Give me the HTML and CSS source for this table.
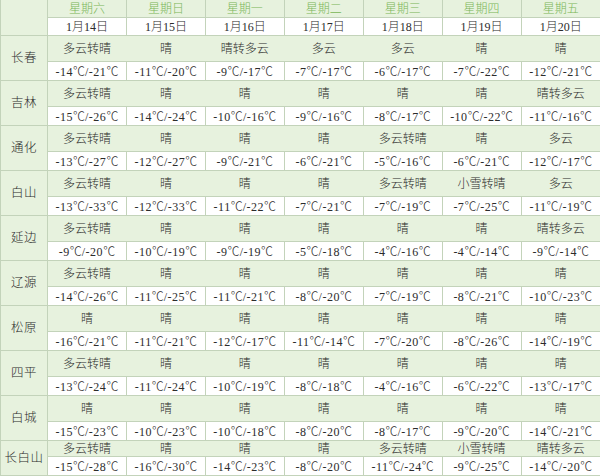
FILE: index.html
```html
<!DOCTYPE html>
<html lang="zh-CN">
<head>
<meta charset="utf-8">
<title>吉林天气预报</title>
<link rel="stylesheet" href="styles.css">
</head>
<body>
<table class="wx">
<colgroup><col class="c-city"><col><col><col><col><col><col><col></colgroup>
<thead>
<tr class="wk"><th rowspan="2" class="corner"></th><th>星期六</th><th>星期日</th><th>星期一</th><th>星期二</th><th>星期三</th><th>星期四</th><th>星期五</th></tr>
<tr class="dt"><td>1月14日</td><td>1月15日</td><td>1月16日</td><td>1月17日</td><td>1月18日</td><td>1月19日</td><td>1月20日</td></tr>
</thead>
<tbody>
<tr class="w"><th rowspan="2" class="city">长春</th><td>多云转晴</td><td>晴</td><td>晴转多云</td><td>多云</td><td>多云</td><td>晴</td><td>晴</td></tr>
<tr class="t"><td>-14<span class="u">℃</span>/-21<span class="u">℃</span></td><td>-11<span class="u">℃</span>/-20<span class="u">℃</span></td><td>-9<span class="u">℃</span>/-17<span class="u">℃</span></td><td>-7<span class="u">℃</span>/-17<span class="u">℃</span></td><td>-6<span class="u">℃</span>/-17<span class="u">℃</span></td><td>-7<span class="u">℃</span>/-22<span class="u">℃</span></td><td>-12<span class="u">℃</span>/-21<span class="u">℃</span></td></tr>
<tr class="w"><th rowspan="2" class="city">吉林</th><td>多云转晴</td><td>晴</td><td>晴</td><td>晴</td><td>晴</td><td>晴</td><td>晴转多云</td></tr>
<tr class="t"><td>-15<span class="u">℃</span>/-26<span class="u">℃</span></td><td>-14<span class="u">℃</span>/-24<span class="u">℃</span></td><td>-10<span class="u">℃</span>/-16<span class="u">℃</span></td><td>-9<span class="u">℃</span>/-16<span class="u">℃</span></td><td>-8<span class="u">℃</span>/-17<span class="u">℃</span></td><td>-10<span class="u">℃</span>/-22<span class="u">℃</span></td><td>-11<span class="u">℃</span>/-16<span class="u">℃</span></td></tr>
<tr class="w"><th rowspan="2" class="city">通化</th><td>多云转晴</td><td>晴</td><td>晴</td><td>晴</td><td>多云转晴</td><td>晴</td><td>多云</td></tr>
<tr class="t"><td>-13<span class="u">℃</span>/-27<span class="u">℃</span></td><td>-12<span class="u">℃</span>/-27<span class="u">℃</span></td><td>-9<span class="u">℃</span>/-21<span class="u">℃</span></td><td>-6<span class="u">℃</span>/-21<span class="u">℃</span></td><td>-5<span class="u">℃</span>/-16<span class="u">℃</span></td><td>-6<span class="u">℃</span>/-21<span class="u">℃</span></td><td>-12<span class="u">℃</span>/-17<span class="u">℃</span></td></tr>
<tr class="w"><th rowspan="2" class="city">白山</th><td>多云转晴</td><td>晴</td><td>晴</td><td>晴</td><td>多云转晴</td><td>小雪转晴</td><td>多云</td></tr>
<tr class="t"><td>-13<span class="u">℃</span>/-33<span class="u">℃</span></td><td>-12<span class="u">℃</span>/-33<span class="u">℃</span></td><td>-11<span class="u">℃</span>/-22<span class="u">℃</span></td><td>-7<span class="u">℃</span>/-21<span class="u">℃</span></td><td>-7<span class="u">℃</span>/-19<span class="u">℃</span></td><td>-7<span class="u">℃</span>/-25<span class="u">℃</span></td><td>-11<span class="u">℃</span>/-19<span class="u">℃</span></td></tr>
<tr class="w"><th rowspan="2" class="city">延边</th><td>多云转晴</td><td>晴</td><td>晴</td><td>晴</td><td>晴</td><td>晴</td><td>晴转多云</td></tr>
<tr class="t"><td>-9<span class="u">℃</span>/-20<span class="u">℃</span></td><td>-10<span class="u">℃</span>/-19<span class="u">℃</span></td><td>-9<span class="u">℃</span>/-19<span class="u">℃</span></td><td>-5<span class="u">℃</span>/-18<span class="u">℃</span></td><td>-4<span class="u">℃</span>/-16<span class="u">℃</span></td><td>-4<span class="u">℃</span>/-14<span class="u">℃</span></td><td>-9<span class="u">℃</span>/-14<span class="u">℃</span></td></tr>
<tr class="w"><th rowspan="2" class="city">辽源</th><td>多云转晴</td><td>晴</td><td>晴</td><td>晴</td><td>晴</td><td>晴</td><td>晴</td></tr>
<tr class="t"><td>-14<span class="u">℃</span>/-26<span class="u">℃</span></td><td>-11<span class="u">℃</span>/-25<span class="u">℃</span></td><td>-11<span class="u">℃</span>/-21<span class="u">℃</span></td><td>-8<span class="u">℃</span>/-20<span class="u">℃</span></td><td>-7<span class="u">℃</span>/-19<span class="u">℃</span></td><td>-8<span class="u">℃</span>/-21<span class="u">℃</span></td><td>-10<span class="u">℃</span>/-23<span class="u">℃</span></td></tr>
<tr class="w"><th rowspan="2" class="city">松原</th><td>晴</td><td>晴</td><td>晴</td><td>晴</td><td>晴</td><td>晴</td><td>晴</td></tr>
<tr class="t"><td>-16<span class="u">℃</span>/-21<span class="u">℃</span></td><td>-11<span class="u">℃</span>/-21<span class="u">℃</span></td><td>-12<span class="u">℃</span>/-17<span class="u">℃</span></td><td>-11<span class="u">℃</span>/-14<span class="u">℃</span></td><td>-7<span class="u">℃</span>/-20<span class="u">℃</span></td><td>-8<span class="u">℃</span>/-26<span class="u">℃</span></td><td>-14<span class="u">℃</span>/-19<span class="u">℃</span></td></tr>
<tr class="w"><th rowspan="2" class="city">四平</th><td>多云转晴</td><td>晴</td><td>晴</td><td>晴</td><td>晴</td><td>晴</td><td>晴</td></tr>
<tr class="t"><td>-13<span class="u">℃</span>/-24<span class="u">℃</span></td><td>-11<span class="u">℃</span>/-24<span class="u">℃</span></td><td>-10<span class="u">℃</span>/-19<span class="u">℃</span></td><td>-8<span class="u">℃</span>/-18<span class="u">℃</span></td><td>-4<span class="u">℃</span>/-16<span class="u">℃</span></td><td>-6<span class="u">℃</span>/-22<span class="u">℃</span></td><td>-13<span class="u">℃</span>/-17<span class="u">℃</span></td></tr>
<tr class="w"><th rowspan="2" class="city">白城</th><td>晴</td><td>晴</td><td>晴</td><td>晴</td><td>晴</td><td>晴</td><td>晴</td></tr>
<tr class="t"><td>-15<span class="u">℃</span>/-23<span class="u">℃</span></td><td>-10<span class="u">℃</span>/-23<span class="u">℃</span></td><td>-10<span class="u">℃</span>/-18<span class="u">℃</span></td><td>-8<span class="u">℃</span>/-20<span class="u">℃</span></td><td>-8<span class="u">℃</span>/-17<span class="u">℃</span></td><td>-9<span class="u">℃</span>/-20<span class="u">℃</span></td><td>-14<span class="u">℃</span>/-21<span class="u">℃</span></td></tr>
<tr class="w last"><th rowspan="2" class="city">长白山</th><td>多云转晴</td><td>晴</td><td>晴</td><td>晴</td><td>多云转晴</td><td>小雪转晴</td><td>晴转多云</td></tr>
<tr class="t"><td>-15<span class="u">℃</span>/-28<span class="u">℃</span></td><td>-16<span class="u">℃</span>/-30<span class="u">℃</span></td><td>-14<span class="u">℃</span>/-23<span class="u">℃</span></td><td>-8<span class="u">℃</span>/-20<span class="u">℃</span></td><td>-11<span class="u">℃</span>/-24<span class="u">℃</span></td><td>-9<span class="u">℃</span>/-25<span class="u">℃</span></td><td>-14<span class="u">℃</span>/-20<span class="u">℃</span></td></tr>
</tbody>
</table>
</body>
</html>
```
FILE: styles.css
```css
html, body {
  margin: 0;
  padding: 0;
  background: #e7f2de;
}
body {
  width: 600px;
  height: 476px;
  overflow: hidden;
}
.wx {
  width: 600px;
  table-layout: fixed;
  border-collapse: collapse;
  font-family: "Liberation Serif", "Noto Sans CJK SC", serif;
  font-size: 12px;
  line-height: 14px;
  color: #2b2b2b;
  background: #e7f2de;
}
.c-city {
  width: 47px;
}
.wx th, .wx td {
  padding: 0;
  text-align: center;
  vertical-align: middle;
  border: 1px solid #c3d3ba;
  white-space: nowrap;
  overflow: hidden;
  font-weight: 300;
}
.wk th {
  height: 17px;
  color: #7ab657;
  border-top: none;
}
.corner {
  border-left: none;
}
.dt td {
  height: 17px;
  background: #ffffff;
}
.w td {
  height: 25px;
  border-left-color: #e7f2de;
  border-right-color: #e7f2de;
}
.w.last td {
  height: 15px;
}
.t td {
  height: 18px;
  background: #ffffff;
  letter-spacing: 0.5px;
}
.u {
  font-family: "Noto Sans CJK SC", sans-serif;
  letter-spacing: 0;
}
.city {
  border-left: none;
  font-size: 12.5px;
  letter-spacing: 0.5px;
}
.wx tr > :last-child {
  border-right: none;
}
```
